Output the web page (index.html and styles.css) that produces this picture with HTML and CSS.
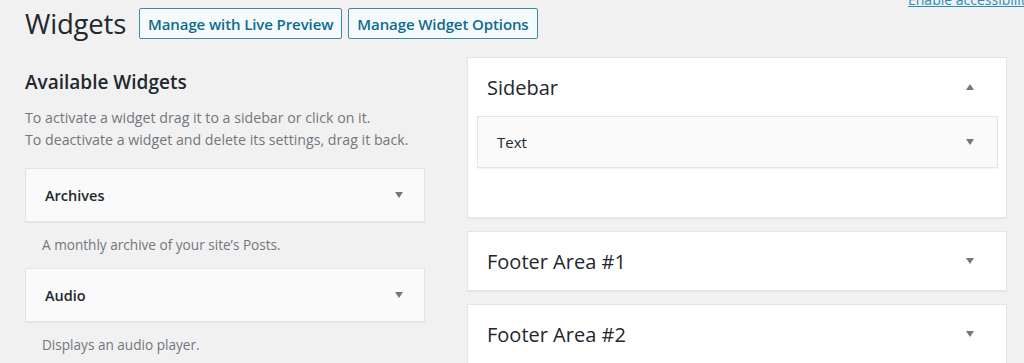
FILE: index.html
```html
<!DOCTYPE html>
<html lang="en">
<head>
    <meta charset="UTF-8">
    <title>Widgets</title>
    <link rel="stylesheet" href="styles.css">
</head>
<body>
    <a class="a11y-link" href="#">Enable accessibility mode</a>
    <div class="wrap">
        <div class="page-head">
            <h1>Widgets</h1>
            <a class="head-btn" href="#">Manage with Live Preview</a>
            <a class="head-btn" href="#">Manage Widget Options</a>
        </div>
        <div class="columns">
            <div class="available">
                <h2>Available Widgets</h2>
                <p class="intro">To activate a widget drag it to a sidebar or click on it.<br>To deactivate a widget and delete its settings, drag it back.</p>

                <div class="widget">
                    <span>Archives</span>
                    <span class="arrow down"></span>
                </div>
                <p class="widget-desc">A monthly archive of your site’s Posts.</p>

                <div class="widget">
                    <span>Audio</span>
                    <span class="arrow down"></span>
                </div>
                <p class="widget-desc">Displays an audio player.</p>
            </div>

            <div class="sidebars">
                <div class="area open">
                    <div class="area-head">
                        <h3>Sidebar</h3>
                        <span class="arrow up"></span>
                    </div>
                    <div class="widget inner">
                        <span>Text</span>
                        <span class="arrow down"></span>
                    </div>
                </div>
                <div class="area">
                    <div class="area-head">
                        <h3>Footer Area #1</h3>
                        <span class="arrow down"></span>
                    </div>
                </div>
                <div class="area">
                    <div class="area-head">
                        <h3>Footer Area #2</h3>
                        <span class="arrow down"></span>
                    </div>
                </div>
            </div>
        </div>
    </div>
</body>
</html>
```

FILE: styles.css
```css
body {
    margin: 0;
    background: #f1f1f1;
    font-family: "Open Sans", "Noto Sans", sans-serif;
    color: #23282d;
    overflow: hidden;
}
.a11y-link {
    position: absolute;
    top: -10px;
    left: 908px;
    font-size: 14px;
    color: #2a8fb8;
    white-space: nowrap;
}
.wrap {
    padding: 8px 17px 0 25px;
}
.page-head {
    display: flex;
    align-items: center;
    gap: 6px;
    height: 31px;
}
.page-head h1 {
    margin: 0 7px 0 0;
    font-size: 27.5px;
    font-weight: 400;
    letter-spacing: -0.2px;
}
.head-btn {
    display: flex;
    align-items: center;
    height: 29px;
    padding: 0 8px;
    border: 1px solid #3d8ca6;
    border-radius: 2px;
    background: #f5fafc;
    color: #0f6b8e;
    font-size: 15px;
    font-weight: 600;
    text-decoration: none;
    letter-spacing: -0.1px;
}
.columns {
    display: flex;
    gap: 42px;
    margin-top: 18px;
}
.available {
    width: 400px;
}
.available h2 {
    margin: 0;
    font-size: 19px;
    font-weight: 600;
    line-height: 50px;
}
.intro {
    margin: 0 0 17px;
    font-size: 14.2px;
    line-height: 22px;
    color: #72777c;
}
.widget {
    display: flex;
    justify-content: space-between;
    align-items: center;
    height: 52px;
    padding: 0 21px 0 19px;
    background: #fafafa;
    border: 1px solid #e5e5e5;
    box-shadow: 0 1px 1px rgba(0, 0, 0, 0.04);
    font-size: 14.5px;
    font-weight: 600;
}
.widget-desc {
    margin: 0;
    padding: 13px 0 13px 17px;
    font-size: 13.6px;
    line-height: 20px;
    color: #72777c;
}
.arrow {
    width: 0;
    height: 0;
    border-left: 4px solid transparent;
    border-right: 4px solid transparent;
}
.arrow.down {
    border-top: 6px solid #777;
}
.arrow.up {
    border-bottom: 6px solid #777;
}
.sidebars {
    width: 540px;
    display: flex;
    flex-direction: column;
    gap: 13px;
}
.area {
    background: #fff;
    border: 1px solid #e5e5e5;
    box-shadow: 0 1px 1px rgba(0, 0, 0, 0.04);
}
.area.open {
    height: 159px;
}
.area-head {
    display: flex;
    justify-content: space-between;
    align-items: center;
    height: 58px;
    padding: 0 32px 0 19px;
}
.area-head h3 {
    margin: 0;
    font-size: 20px;
    font-weight: 400;
}
.widget.inner {
    margin: 0 8px 0 9px;
    height: 50px;
    font-weight: 400;
    font-size: 15px;
    padding-left: 19px;
    padding-right: 23px;
}
```
